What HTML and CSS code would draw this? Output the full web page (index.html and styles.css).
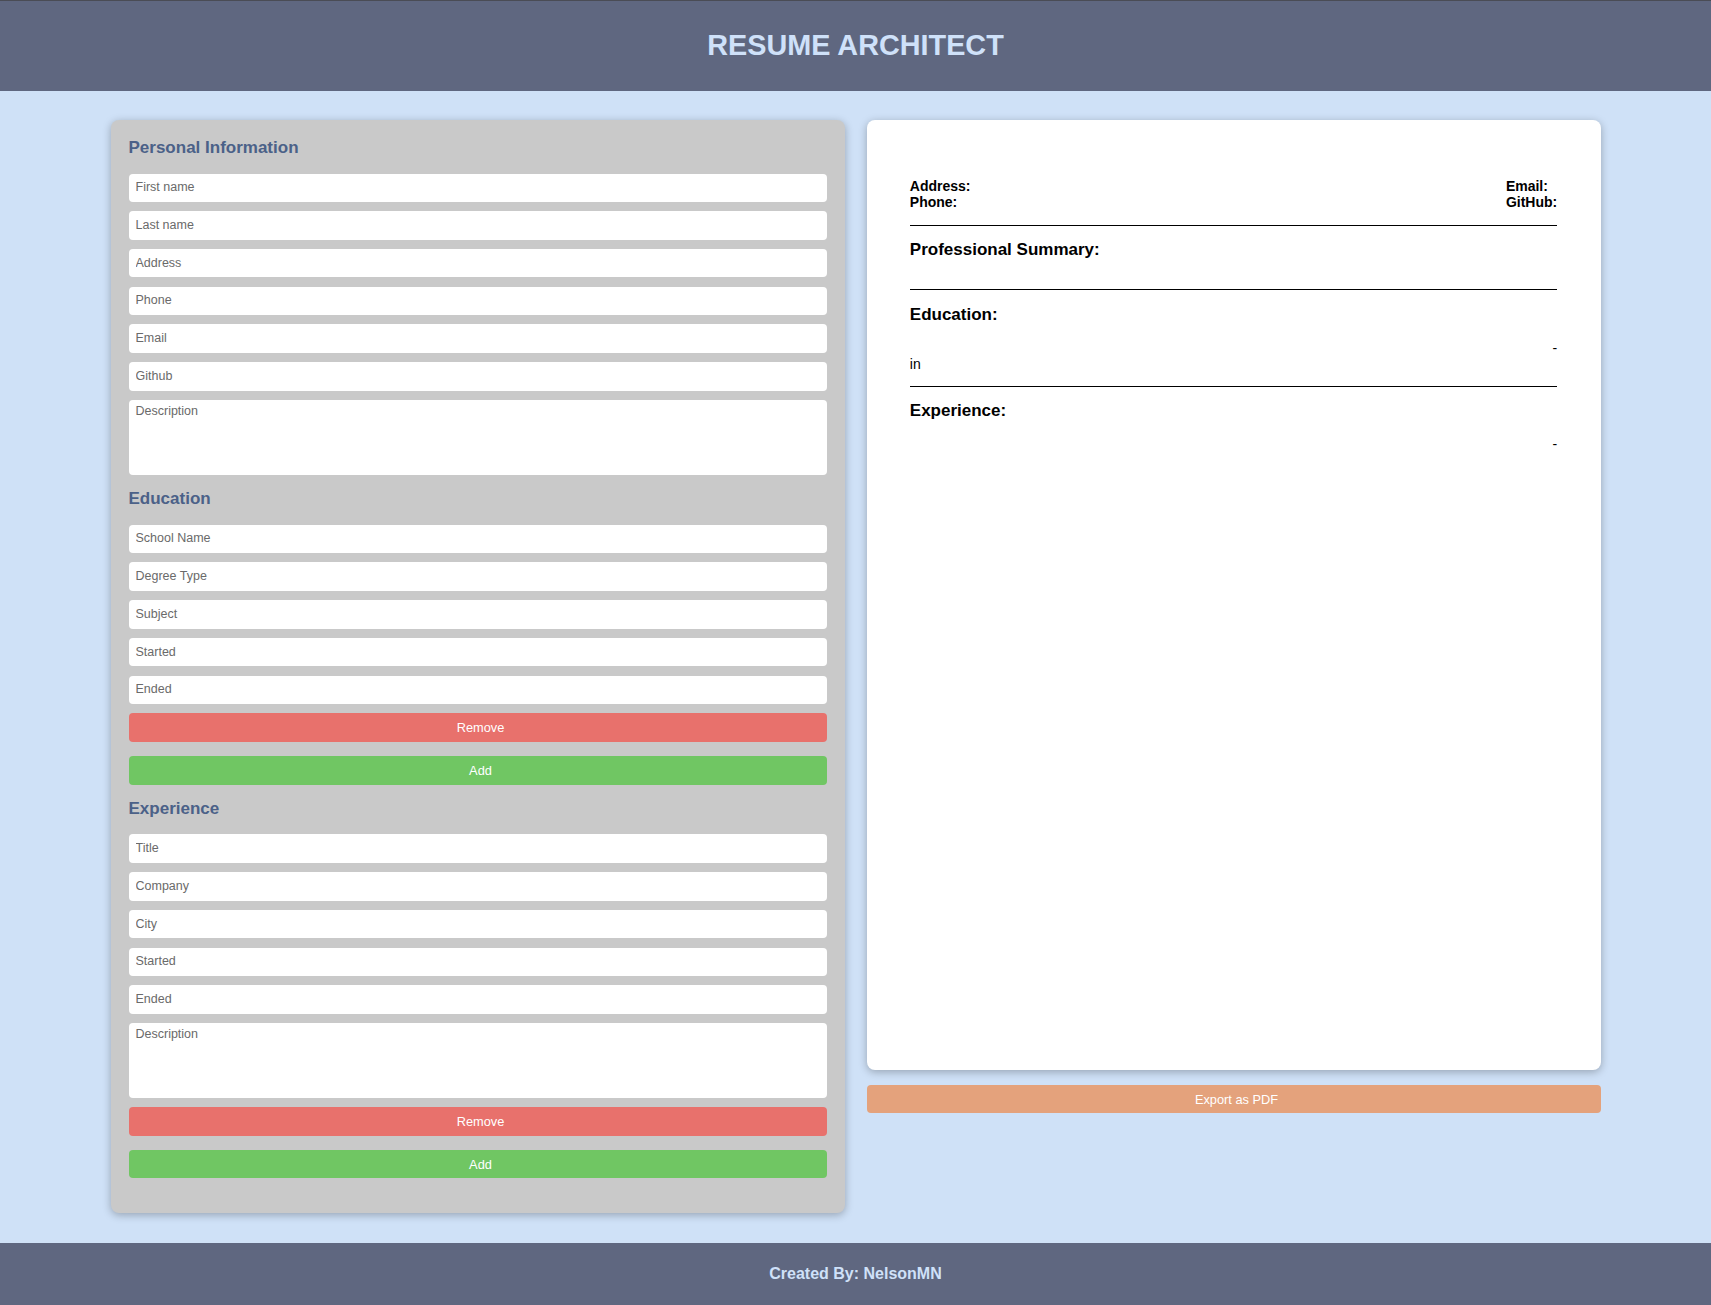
FILE: index.html
```html
<!DOCTYPE html>
<html lang="en">
<head>
<meta charset="utf-8">
<title>Resume Architect</title>
<link rel="stylesheet" href="styles.css">
</head>
<body>
<header class="site-header">
  <h1 class="site-title">RESUME ARCHITECT</h1>
</header>
<main class="main">
  <section class="editor">
    <h2 class="editor-heading">Personal Information</h2>
    <input class="field" type="text" placeholder="First name">
    <input class="field" type="text" placeholder="Last name">
    <input class="field" type="text" placeholder="Address">
    <input class="field" type="text" placeholder="Phone">
    <input class="field" type="text" placeholder="Email">
    <input class="field" type="text" placeholder="Github">
    <textarea class="field area" placeholder="Description"></textarea>

    <h2 class="editor-heading">Education</h2>
    <input class="field" type="text" placeholder="School Name">
    <input class="field" type="text" placeholder="Degree Type">
    <input class="field" type="text" placeholder="Subject">
    <input class="field" type="text" placeholder="Started">
    <input class="field" type="text" placeholder="Ended">
    <button class="btn btn-remove" type="button">Remove</button>
    <button class="btn btn-add" type="button">Add</button>

    <h2 class="editor-heading">Experience</h2>
    <input class="field" type="text" placeholder="Title">
    <input class="field" type="text" placeholder="Company">
    <input class="field" type="text" placeholder="City">
    <input class="field" type="text" placeholder="Started">
    <input class="field" type="text" placeholder="Ended">
    <textarea class="field area" placeholder="Description"></textarea>
    <button class="btn btn-remove" type="button">Remove</button>
    <button class="btn btn-add" type="button">Add</button>
  </section>

  <div class="preview-col">
    <section class="preview">
      <div class="contact">
        <div class="contact-col">
          <div>Address: </div>
          <div>Phone: </div>
        </div>
        <div class="contact-col">
          <div>Email: </div>
          <div>GitHub: </div>
        </div>
      </div>
      <div class="pv-section">
        <h3 class="pv-heading">Professional Summary:</h3>
        <p class="pv-text"></p>
      </div>
      <div class="pv-section">
        <h3 class="pv-heading">Education:</h3>
        <div class="pv-row"><span class="pv-left"></span><span class="pv-right"> - </span></div>
        <div class="pv-line"> in </div>
      </div>
      <div class="pv-section last">
        <h3 class="pv-heading">Experience:</h3>
        <div class="pv-row"><span class="pv-left"></span><span class="pv-right"> - </span></div>
      </div>
    </section>
    <button class="btn btn-export" type="button">Export as PDF</button>
  </div>
</main>
<footer class="site-footer">Created By: NelsonMN</footer>
</body>
</html>
```
FILE: styles.css
```css
* { box-sizing: border-box; }

body {
  margin: 0;
  font-family: "Liberation Sans", Arial, Helvetica, sans-serif;
  background: #cfe1f7;
}

.site-header {
  background: #5f6780;
  border-top: 1px solid #4a4c55;
  padding: 28px 0 29px;
  text-align: center;
}

.site-title {
  margin: 0;
  font-size: 28.8px;
  line-height: normal;
  font-weight: bold;
  color: #cfe1f9;
}

.main {
  display: grid;
  grid-template-columns: 734px 734px;
  column-gap: 22px;
  justify-content: center;
  align-items: start;
  padding: 29px 0 30px;
}

.editor {
  display: flex;
  flex-direction: column;
  background: #c9c9c9;
  border-radius: 8px;
  padding: 13px 18px 24.8px;
  box-shadow: 0 2px 8px rgba(0, 0, 0, 0.28);
}

.editor-heading {
  margin: 5px 0 15.5px;
  font-size: 17px;
  line-height: normal;
  font-weight: bold;
  color: #4b6188;
}

.field {
  display: block;
  width: 100%;
  height: 28.4px;
  flex: none;
  margin: 0 0 9.35px;
  padding: 0 7px 1px;
  border: none;
  border-radius: 4px;
  background: #fff;
  font-family: "Liberation Sans", Arial, Helvetica, sans-serif;
  font-size: 12.5px;
  color: #333;
  outline: none;
}

.field::placeholder { color: #6a6a6a; }

.area {
  height: 75px;
  padding: 4px 7px;
  resize: none;
  line-height: normal;
}

.btn {
  display: block;
  width: 100%;
  height: 28.4px;
  flex: none;
  border: none;
  border-radius: 4px;
  padding: 0 0 0 6px;
  color: #fff;
  font-family: "Liberation Sans", Arial, Helvetica, sans-serif;
  font-size: 12.8px;
  cursor: pointer;
}

.btn-remove {
  background: #e8716c;
  margin: 0 0 14.3px;
}

.btn-add {
  background: #70c663;
  margin: 0 0 9.4px;
}

.preview-col {
  display: flex;
  flex-direction: column;
  gap: 15px;
}

.preview {
  background: #fff;
  border-radius: 8px;
  height: 950px;
  padding: 58.3px 43.3px;
  box-shadow: 0 2px 8px rgba(0, 0, 0, 0.28);
  color: #000;
}

.contact {
  display: flex;
  justify-content: space-between;
  font-size: 14px;
  font-weight: bold;
  line-height: normal;
  padding-bottom: 14.5px;
}

.pv-section {
  border-top: 1px solid #000;
  padding: 14.3px 0;
}

.pv-heading {
  margin: 0 0 15px;
  font-size: 17px;
  line-height: normal;
  font-weight: bold;
}

.pv-text {
  margin: 0;
  font-size: 14px;
}

.pv-row {
  display: flex;
  justify-content: space-between;
  font-size: 14px;
  line-height: normal;
  min-height: 16px;
}

.pv-line {
  font-size: 14px;
  line-height: normal;
}

.btn-export {
  background: #e4a27c;
  height: 28px;
}

.site-footer {
  height: 62px;
  background: #5f6780;
  display: flex;
  align-items: center;
  justify-content: center;
  font-size: 16px;
  font-weight: bold;
  color: #cfe1f9;
}
```
